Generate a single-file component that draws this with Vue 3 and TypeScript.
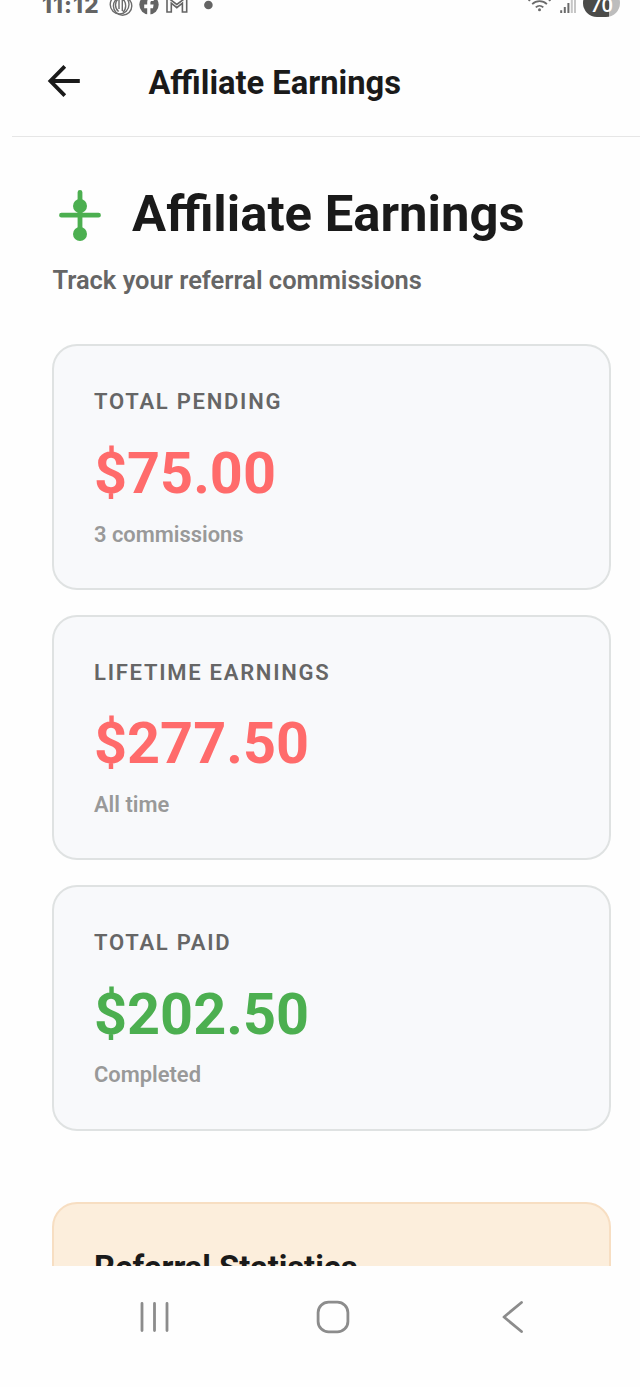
<script setup lang="ts">
interface EarningsCard {
  label: string
  amount: string
  note: string
  tone: 'coral' | 'green'
}

const cards: EarningsCard[] = [
  { label: 'TOTAL PENDING', amount: '$75.00', note: '3 commissions', tone: 'coral' },
  { label: 'LIFETIME EARNINGS', amount: '$277.50', note: 'All time', tone: 'coral' },
  { label: 'TOTAL PAID', amount: '$202.50', note: 'Completed', tone: 'green' },
]
</script>

<template>
  <div class="screen">
    <div class="status">
      <span class="clock">11:12</span>
      <svg class="notices" width="110" height="20" viewBox="108 0 110 20">
        <g fill="none" stroke="#6c6c6c" stroke-width="1.4">
          <circle cx="119.6" cy="4.5" r="9.4" />
          <circle cx="122.6" cy="6" r="9.2" />
          <path d="M118.600 11.500c-4-3-4.300-10 .2-13M122.800 12.500c4-3.500 3.700-10-.2-14M119 0v9M122.300 0v11" />
        </g>
        <circle cx="149" cy="4.800" r="9.700" fill="#646464" />
        <path d="M147.200 15V8.200h-3V4.600h3V2.300c0-3 1.700-4.500 4.300-4.500h2.200V1h-1.700c-1.200 0-1.600.6-1.600 1.600v2h3.200l-.6 3.600h-2.600V15z" fill="#fff" />
        <path d="M167-3V12h4.300V3.200l5.500 4.500 5.600-4.500V12h4.300V-3l-9.900 7.500z" fill="none" stroke="#646464" stroke-width="1.600" />
        <circle cx="208.400" cy="5" r="4.300" fill="#646464" />
      </svg>
      <svg class="signals" width="50" height="20" viewBox="528 0 50 20">
        <g fill="none" stroke="#6a6a6a" stroke-width="1.800">
          <path d="M528.600.8a15.500 15.500 0 0 1 21.800 0" />
          <path d="M532.200 4.200a10.500 10.500 0 0 1 14.700 0" />
          <path d="M535.800 7.300a5.400 5.400 0 0 1 7.500 0" />
        </g>
        <circle cx="539.500" cy="9.800" r="1.500" fill="#6a6a6a" />
        <path d="M561.200 10.200v2.700M564.800 7v5.900M568.400 3v9.900" stroke="#6a6a6a" stroke-width="2" />
        <path d="M571.800 0v12.900M575 0v12.900" stroke="#c6c6c6" stroke-width="2" />
      </svg>
      <span class="battery"><span>70</span></span>
    </div>

    <header class="bar">
      <svg class="back" width="36" height="36" viewBox="0 0 36 36">
        <path d="M33.800 18H4.800M18.800 3.400L4.400 18l14.400 14.600" fill="none" stroke="#1a1a1a" stroke-width="3.800" />
      </svg>
      <span class="bar-title">Affiliate Earnings</span>
    </header>

    <main class="content">
      <div class="heading">
        <svg class="logo" width="44" height="54" viewBox="0 0 44 54">
          <g stroke="#4caf50" stroke-width="4.800" stroke-linecap="round">
            <path d="M22 4.300V46M3.500 27.200h37" />
          </g>
          <circle cx="22" cy="18" r="7" fill="#4caf50" />
          <circle cx="22" cy="46" r="7" fill="#4caf50" />
        </svg>
        <h1>Affiliate Earnings</h1>
      </div>
      <p class="subtitle">Track your referral commissions</p>

      <section class="cards">
        <article v-for="card in cards" :key="card.label" class="card">
          <span class="label">{{ card.label }}</span>
          <span class="amount" :class="card.tone">{{ card.amount }}</span>
          <span class="note">{{ card.note }}</span>
        </article>
      </section>

      <section class="referral">
        <h2>Referral Statistics</h2>
      </section>
    </main>

    <nav class="nav">
      <svg width="32" height="36" viewBox="0 0 32 36">
        <path d="M3 4.500v27M15.500 4.500v27M28 4.500v27" stroke="#8c8c8c" stroke-width="2.800" stroke-linecap="round" />
      </svg>
      <svg class="home" width="36" height="36" viewBox="0 0 36 36">
        <rect x="3.100" y="3.100" width="29.800" height="29.800" rx="10.500" fill="none" stroke="#8c8c8c" stroke-width="2.800" />
      </svg>
      <svg width="24" height="36" viewBox="0 0 24 36">
        <path d="M20.500 3.500L3 18l17.500 14.500" fill="none" stroke="#8c8c8c" stroke-width="2.800" stroke-linecap="round" stroke-linejoin="round" />
      </svg>
    </nav>
  </div>
</template>

<style>
body {
  margin: 0;
  background: #fefefe;
}
</style>

<style scoped>
.screen {
  width: 640px;
  height: 1387px;
  display: flex;
  flex-direction: column;
  overflow: hidden;
  background: #fefefe;
  font-family: Roboto, "Liberation Sans", sans-serif;
  color: #1a1a1a;
}

.status {
  flex: none;
  height: 28px;
  display: flex;
  align-items: flex-start;
  padding-left: 42px;
  overflow: hidden;
}

.clock {
  width: 66px;
  margin-top: -9px;
  font: 800 22.500px/28px Inter, sans-serif;
  letter-spacing: 1.100px;
  color: #646464;
}

.signals {
  margin-left: 310px;
}

.battery {
  width: 37px;
  height: 28px;
  margin: -11px 0 0 5px;
  border-radius: 14px;
  background: linear-gradient(90deg, #4b4b49 0 26px, #bdbdbd 26px);
  color: #fff;
  text-align: center;
  font: 600 20px/32px "Open Sans", sans-serif;
}

.bar {
  flex: none;
  box-sizing: border-box;
  height: 109px;
  margin-left: 12px;
  padding: 1px 0 0 34px;
  display: flex;
  align-items: center;
  border-bottom: 1px solid #e6e6e6;
}

.back {
  margin-bottom: 4px;
}

.bar-title {
  margin-left: 66.400px;
  font-size: 32.700px;
  font-weight: 700;
  line-height: 40px;
}

.content {
  flex: none;
  box-sizing: border-box;
  height: 1129px;
  padding: 46px 29px 0 52px;
  overflow: hidden;
}

.heading {
  display: flex;
  align-items: center;
  height: 62px;
  padding-left: 6px;
}

.logo {
  margin-bottom: -1px;
}

h1 {
  margin: 0 0 0 30px;
  font-size: 50.800px;
  font-weight: 700;
  line-height: 60px;
  white-space: nowrap;
}

.subtitle {
  margin: 19px 0 0;
  padding-left: 0.400px;
  font-size: 25.480px;
  font-weight: 600;
  line-height: 32px;
  color: #666;
}

.cards {
  display: grid;
  gap: 24.500px;
  margin-top: 48.300px;
}

.card {
  box-sizing: border-box;
  height: 245.800px;
  padding: 41px 40px 0;
  display: flex;
  flex-direction: column;
  border: 2px solid #dfe2e2;
  border-radius: 25px;
  background: #f8f9fb;
}

.label {
  font-size: 22px;
  font-weight: 600;
  line-height: 30px;
  letter-spacing: 1.740px;
  color: #666;
}

.amount {
  margin-top: 21.800px;
  font-size: 57.600px;
  font-weight: 700;
  line-height: 70px;
}

.coral {
  color: #ff6b6b;
}

.green {
  color: #4caf50;
}

.note {
  margin-top: 10.700px;
  font-size: 21.900px;
  font-weight: 600;
  line-height: 30px;
  color: #999;
}

.referral {
  box-sizing: border-box;
  height: 160px;
  margin-top: 71.500px;
  padding: 44px 40px 0;
  border: 2px solid #f7dec2;
  border-radius: 25px;
  background: #fceedc;
}

h2 {
  margin: 0;
  font-size: 32.650px;
  font-weight: 700;
  line-height: 40px;
}

.nav {
  flex: none;
  height: 101px;
  display: flex;
  align-items: center;
  justify-content: space-between;
  padding: 0 115px 0 139px;
}

.home {
  margin-right: 6px;
}
</style>
